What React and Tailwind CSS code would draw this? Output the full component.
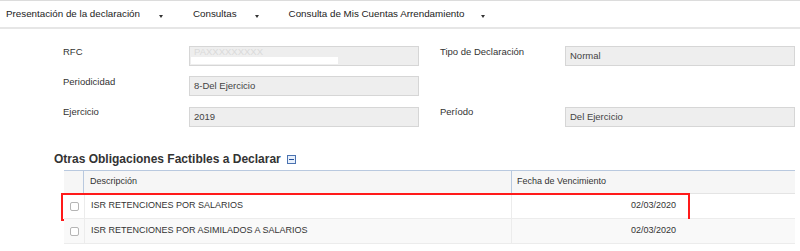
import React from "react";

const navItems = [
  { label: "Presentación de la declaración", gap: "ml-[19px]" },
  { label: "Consultas", gap: "ml-[18px]" },
  { label: "Consulta de Mis Cuentas Arrendamiento", gap: "ml-[17px]" },
];

const rows = [
  { desc: "ISR RETENCIONES POR SALARIOS", date: "02/03/2020", marked: true },
  { desc: "ISR RETENCIONES POR ASIMILADOS A SALARIOS", date: "02/03/2020" },
];

function Caret() {
  return <span className="inline-block mt-[4px] w-0 h-0 border-l-[2.5px] border-r-[2.5px] border-t-[3px] border-l-transparent border-r-transparent border-t-[#333]" />;
}

function Field({ value, children }) {
  return (
    <div className="relative h-[20px] bg-[#eeeeee] border border-[#d6d6d6] flex items-center pl-[4px] text-[9.5px] text-[#444]">
      {value}
      {children}
    </div>
  );
}

function Label({ text }) {
  return <div className="text-[9.5px] text-[#333] leading-[12px]">{text}</div>;
}

export default function App() {
  return (
    <div className="w-[800px] h-[251px] bg-white overflow-hidden" style={{ fontFamily: '"Liberation Sans", Arial, sans-serif' }}>
      {/* menu */}
      <div className="h-[29px] border-t border-b-2 border-t-[#dcdcdc] border-b-[#e6e6e6] flex items-center pl-[6px] text-[9.8px] text-[#222]">
        {navItems.map((item, i) => (
          <div key={item.label} className={"flex items-center " + (i > 0 ? "ml-[30px]" : "")}>
            <span>{item.label}</span>
            <span className={item.gap + " flex"}>
              <Caret />
            </span>
          </div>
        ))}
      </div>

      {/* datos de la declaración */}
      <div className="grid grid-cols-[126px_230px_21px_125px_230px] gap-y-[10px] pl-[63px] pt-[17px]">
        <Label text="RFC" />
        <Field value={<span className="text-[#dadada] -mt-[7px]">PAXXXXXXXXX</span>}>
          <div className="absolute left-[1px] top-[10px] w-[147px] h-[7px] bg-white" />
        </Field>
        <div />
        <Label text="Tipo de Declaración" />
        <Field value="Normal" />

        <Label text="Periodicidad" />
        <Field value="8-Del Ejercicio" />
        <div />
        <div />
        <div />

        <Label text="Ejercicio" />
        <div className="mt-px">
          <Field value="2019" />
        </div>
        <div />
        <Label text="Período" />
        <div className="mt-px">
          <Field value="Del Ejercicio" />
        </div>
      </div>

      {/* obligaciones */}
      <div className="pl-[54px] mt-[25px] flex items-center h-[14px]">
        <h2 className="text-[12px] font-bold text-[#333] leading-[14px]">Otras Obligaciones Factibles a Declarar</h2>
        <span className="ml-[6px] w-[9px] h-[9px] border border-[#4a72b0] bg-[#e8f0fb] flex items-center justify-center">
          <span className="w-[5px] h-px bg-[#24509a]" />
        </span>
      </div>

      <div className="ml-[64px] mt-[4px] w-[731px] text-[9px] text-[#333]">
        <div className="flex h-[24px] bg-[#f6f6f6] border-t border-b border-t-[#b9c9df] border-b-[#e4e4e4]">
          <div className="w-[20px] border-r border-[#b9c9df]" />
          <div className="w-[427px] flex items-center pl-[6px]">Descripción</div>
          <div className="flex-1 flex items-center pl-[5px] border-l border-[#b9c9df]">Fecha de Vencimiento</div>
        </div>
        {rows.map((row, i) => (
          <div key={row.desc} className={"relative flex h-[25px] border-b border-[#ececec] " + (i % 2 ? "bg-[#f9f9f9]" : "bg-white")}>
            <div className="w-[20px] flex items-center justify-center">
              <span className="w-[9px] h-[9px] rounded-[2px] border border-[#b5b5b5] bg-white" />
            </div>
            <div className="w-[427px] flex items-center pl-[6px] border-l border-[#ececec]">{row.desc}</div>
            <div className="flex-1 flex items-center justify-end pr-[119px] border-l border-[#ececec]">{row.date}</div>
            {row.marked && (
              <div className="absolute left-[-3px] top-[-1px] w-[629px] h-[28px] border-2 border-[#ff1a1a] pointer-events-none" />
            )}
          </div>
        ))}
      </div>
    </div>
  );
}
